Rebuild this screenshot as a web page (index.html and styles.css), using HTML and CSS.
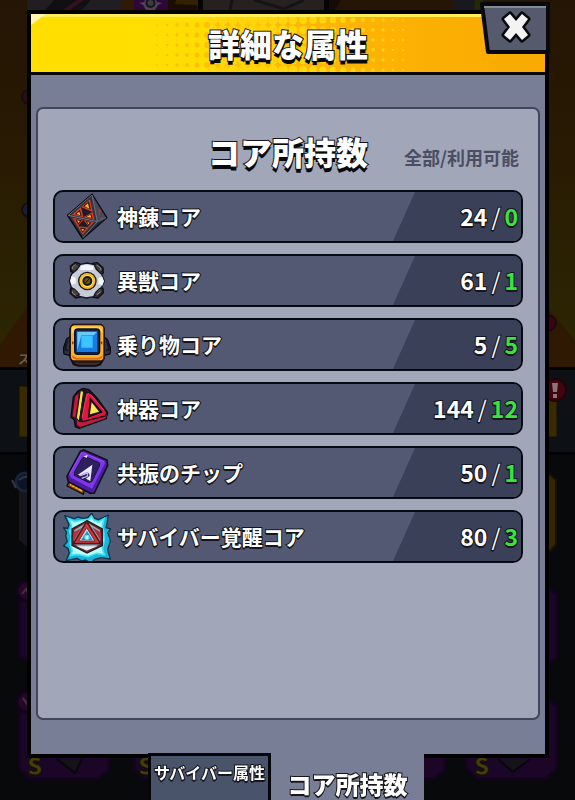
FILE: index.html
```html
<!DOCTYPE html>
<html lang="ja">
<head>
<meta charset="utf-8">
<meta name="viewport" content="width=device-width, initial-scale=1">
<title>詳細な属性</title>
<link rel="stylesheet" href="styles.css">
</head>
<body>
<svg class="backdrop" viewBox="0 0 575 800" preserveAspectRatio="xMidYMin slice" aria-hidden="true">
  <defs>
    <linearGradient id="amber" x1="0" y1="0" x2="0" y2="1"><stop offset="0" stop-color="#241505"/><stop offset=".35" stop-color="#281903"/><stop offset="1" stop-color="#2c2702"/></linearGradient>
  </defs>
  <rect width="575" height="800" fill="#07090b"/>
  <rect width="575" height="368" fill="url(#amber)"/>
  <path d="M0 368V345L28 306V368zM547 306l28 35v27h-28z" fill="#301902"/>
  <path d="M27 0h94v10H27z" fill="#201e23"/><path d="M45 10 54 0h37l-9 10z" fill="#101014"/><path d="M63 10 77 0h7L70 10z" fill="#38101b"/>
  <path d="M121 0h13v10h-13z" fill="#301b02"/><path d="M134 0h34v10h-34z" fill="#2c0738"/>
  <path d="m139 3 5-1 2-4h9l2 4 5 1-4 2-3 5h-9l-3-5z" fill="#4b4350"/><circle cx="150.500" cy="3" r="5" fill="#171419"/><circle cx="150.500" cy="3" r="3" fill="#403847"/>
  <path d="M168 0h9l20 6v4h-29z" fill="#1a0d04"/><path d="M176 0h22v5l-23-1z" fill="#342102"/><path d="M198 0h5v10h-5z" fill="#050506"/>
  <path d="M203 0h121v10H203z" fill="#26211f"/><path d="m254 0 30 9 20-9M232 0l-2 10" fill="none" stroke="#151315" stroke-width="3"/>
  <path d="M324 0h5v10h-5z" fill="#050506"/><path d="M329 0h12l-6 10h-6z" fill="#170b0a"/><path d="M453 0h33v10h-33z" fill="#17191f"/><path d="M475 0h8v10h-9z" fill="#262803"/>
  <g stroke="#170c14" stroke-width="2"><circle cx="29" cy="97" r="7" fill="#261018"/><circle cx="29" cy="210" r="7" fill="#172035"/><circle cx="548" cy="323" r="8" fill="#39030f"/></g>
  <text x="18" y="364" class="backdrop-note">スキル</text>
  <path d="M0 368h575v85H0z" fill="#0d1015"/><path d="M0 367h575v3H0zM0 452h575v3H0z" fill="#020304"/>
  <path d="M19 386h12v51H19zM544 386h13v51h-13z" fill="#382b02" stroke="#171003"/>
  <circle cx="555" cy="390" r="11" fill="#42050f" stroke="#240309" stroke-width="2"/><path d="M552 383h6l-1 9h-4zM553 394h4v4h-4z" fill="#8b7778"/>
  <path d="M19 486h12v64l-12-10z" fill="#16161b"/><circle cx="25" cy="482" r="9" fill="#0c1324" stroke="#192239" stroke-width="3"/><path d="m12 480 4 8M19 480q9-7 14 1" stroke="#31374a" stroke-width="2" fill="none"/>
  <path d="m547 472 9 8v65l-9 9z" fill="#352501" stroke="#181004" stroke-width="2"/>
  <g fill="#1b0627" stroke="#12041a" stroke-width="3"><path d="M19 588h15v78l-15-10zM547 586l10 8v63l-10 8zM19 698h90v71l-10 10H30l-11-11zM134 740h85v29l-10 10h-65l-10-10zM360 740h85v29l-10 10h-65l-10-10zM466 740h81v-42l10 8v62l-11 11h-69l-11-11z"/><circle cx="27" cy="591" r="10" fill="#280729"/><circle cx="27" cy="702" r="10" fill="#280729"/></g>
  <path d="m22 594 4-5 4 8M23 698l4 6 4-5" stroke="#41323e" stroke-width="2" fill="none"/>
  <path d="m57 759 18 14 7-14M498 759l15 13 17-13" fill="#15131a" stroke="#07080a" stroke-width="2"/>
  <g class="backdrop-rank"><text x="27" y="775">S</text><text x="138" y="775">S</text><text x="474" y="775">S</text></g>
</svg>

<main class="dialog-layout">
  <section class="dialog" aria-labelledby="dialog-title">
    <header class="dialog-header">
      <svg class="halftone" viewBox="0 0 514 58" preserveAspectRatio="xMidYMid slice" aria-hidden="true"></svg>
      <h1 class="outlined heading" id="dialog-title">詳細な属性</h1>
    </header>
    <button class="close" type="button" aria-label="閉じる">
      <svg viewBox="0 0 70 52" aria-hidden="true">
        <path d="M2 2h66v48H8z" fill="#555b6d" stroke="#08090d" stroke-width="4" stroke-linejoin="round"/>
        <path d="M4 4h62v2H4z" fill="#858994"/>
        <path d="m30 12 6 7 6-7 6 5-6 8 6 8-6 5-6-7-6 7-6-5 6-8-6-8z" fill="#f3f3f3" stroke="#08090d" stroke-width="5" stroke-linejoin="round" paint-order="stroke"/>
      </svg>
    </button>
    <div class="dialog-body">
      <div class="panel">
        <div class="panel-head">
          <h2 class="outlined heading">コア所持数</h2>
          <p class="legend">全部/利用可能</p>
        </div>
        <ul class="cores">
          <li class="core">
            <svg class="core-icon" viewBox="39 24 144 144" aria-hidden="true">
              <path d="m53 91 73-63 44 70-72 63z" fill="#30333f" stroke="#090b10" stroke-width="5" stroke-linejoin="round"/>
              <path d="M126 30 168 98l-26 12z" fill="#464b5a"/><path d="m142 110 26-12-70 61z" fill="#292d39"/>
              <path d="m66 89 54-46 13 61z" fill="#d63f22"/><path d="m67 98 65 13-34 38z" fill="#c93a20"/>
              <path d="m93 66 35 15-28 16zM100 104l17 23-33-3z" fill="#1d1c25"/>
              <path d="m99 64 18-15 6 25zM74 88l16-14 5 19zM107 95l17-9 4 15zM76 103l19 3-10 13zM108 108l16 4-8 11zM90 129l18 1-10 13z" fill="#2f1b20"/>
              <path d="m104 64 10-9 4 16zM79 87l9-7 3 11zM110 95l11-6 3 9zM81 106l9 2-5 6zM112 111l7 2-4 5zM94 132l9 1-5 6z" fill="#ffac38"/>
              <path d="m55 91 71-61 16 80-44 49M55 91l87 19 26-12" fill="none" stroke="#6b7181" stroke-width="3"/><path d="m145 79 7-5-5 15M153 96l5 8" fill="none" stroke="#d33226" stroke-width="3"/>
            </svg>
            <span class="outlined core-name">神錬コア</span><span class="core-value"><span class="outlined count">24<i>/</i><b>0</b></span></span>
          </li>
          <li class="core">
            <svg class="core-icon" viewBox="39 216 144 144" aria-hidden="true">
              <g fill="#443d40" stroke="#0b0d14" stroke-width="4" stroke-linejoin="round"><path d="m62 258-1-14 15-12 13 4 9 10-22 22zM127 235l15-2 17 15 1 16-10 6-25-22zM62 310l-2 15 17 14 14-3 5-11-23-22zM127 336l17 3 16-16-1-13-14-6-24 21z"/></g>
              <path d="m91 238 20-4 22 5 6 14 16 15 8 20-8 19-16 13-8 15-22 4-21-5-8-14-16-13-6-19 7-21 16-13z" fill="#c7ccdb" stroke="#111521" stroke-width="4"/>
              <path d="m92 243 18-4 19 4 2 12H91zM64 273l-3 15 4 12 12-5v-17zM157 275l5 14-5 13-12-6v-17z" fill="#f5f5fb"/>
              <g fill="#4a403f" stroke="#15151c" stroke-width="3" stroke-linejoin="round"><path d="m64 256-1-11 14-10 12 8-16 17zM133 241l9-5 15 13v11l-9 2zM64 313l-1 10 14 11 12-6-16-17zM133 329l9 5 15-13-1-9-8-2z"/></g>
              <path d="m67 252v-6l9-7M140 240l12 9v7M67 319l1 6 9 6M140 330l12-10" fill="none" stroke="#94877a" stroke-width="3"/>
              <circle cx="112" cy="288" r="28" fill="#171717"/><circle cx="112" cy="288" r="24" fill="#ffb817"/><circle cx="112" cy="288" r="18" fill="#ffe96b"/><circle cx="112" cy="288" r="15" fill="#161515"/><circle cx="112" cy="288" r="9" fill="#665217"/><path d="m106 294 12-13" stroke="#181310" stroke-width="3"/>
            </svg>
            <span class="outlined core-name">異獣コア</span><span class="core-value"><span class="outlined count">61<i>/</i><b>1</b></span></span>
          </li>
          <li class="core">
            <svg class="core-icon" viewBox="39 18 144 144" aria-hidden="true">
              <path d="m63 64-13 8-10 28 2 17 20 5zM159 64l13 9 10 27-2 17-21 5z" fill="#303444" stroke="#080b13" stroke-width="4"/><path d="m51 75-6 29 10 3M171 75l6 29-10 3" fill="none" stroke="#121622" stroke-width="6"/>
              <path d="M68 28h86l9 13v88l-12 20-13 4H85l-15-5-10-20V41z" fill="#2c1711" stroke="#090b13" stroke-width="4"/>
              <rect x="61" y="29" width="101" height="109" rx="13" fill="#ffaf20" stroke="#291717" stroke-width="4"/><path d="M68 35h83l6 12v7L147 42H78L65 57V43z" fill="#ffdc58"/><path d="M65 121q2 13 14 13h65q13 0 15-13l-15 7H80z" fill="#dc7515"/>
              <rect x="74" y="42" width="75" height="76" rx="9" fill="#172042" stroke="#09132a" stroke-width="4"/><path d="M80 49h62v62H80z" fill="#147ce3"/><path d="M82 51h59l-10 10H94L82 105z" fill="#6cc8f7"/><path d="M94 62h34v36H94z" fill="#3dc4ff"/><path d="m66 78 7 5-7 6zM157 78l-7 5 7 6z" fill="#963d13"/><path d="m78 143 8 4h52l8-4" fill="none" stroke="#4c4148" stroke-width="3"/>
            </svg>
            <span class="outlined core-name">乗り物コア</span><span class="core-value"><span class="outlined count">5<i>/</i><b>5</b></span></span>
          </li>
          <li class="core">
            <svg class="core-icon" viewBox="39 210 144 144" aria-hidden="true">
              <path d="m83 229 15-9 19 4 24 25 32 44-5 18-80 29-12-5-3-20-10-8 7-62z" fill="#3d1224" stroke="#080b10" stroke-width="4"/>
              <path d="m76 243 10-6-10 70-8-3zM80 316l78-9 13-6-4 9-77 26-8-6z" fill="#c9193e"/><path d="m91 227 11 2-14 91-9-12z" fill="#f3df41" stroke="#17141b" stroke-width="3"/><path d="m104 226-13 95" stroke="#131720" stroke-width="8"/>
              <path d="m116 231 18 16 37 46-5 10-68 17-5-10 14-76z" fill="#de1642" stroke="#14131a" stroke-width="4"/><path d="m116 235-7 10-13 63M121 237l41 49" fill="none" stroke="#ff5070" stroke-width="2"/>
              <path d="m121 252 34 39-39 14z" fill="#342312" stroke="#090a0b" stroke-width="4"/><path d="m125 262 22 28-27 8z" fill="#ffe753"/>
            </svg>
            <span class="outlined core-name">神器コア</span><span class="core-value"><span class="outlined count">144<i>/</i><b>12</b></span></span>
          </li>
          <li class="core">
            <svg class="core-icon" viewBox="39 27 144 144" aria-hidden="true">
              <path d="m60 117 45 26-5 20-49-25z" fill="#82401e" stroke="#0e1018" stroke-width="4"/><path d="m62 122 37 20-3 14-37-20z" fill="#ffad28"/><path d="m69 126-4 13M78 131l-4 13M87 136l-4 13" stroke="#9f571e" stroke-width="3"/>
              <path d="m91 34 10-4 70 30 2 16-40 83-12 1-66-35-4-16z" fill="#4c1b9e" stroke="#0e1020" stroke-width="5"/><path d="m95 36 66 27 7 8-41 76-64-34-6-9z" fill="#7d36eb"/><path d="m95 37-36 64M98 37l65 28" fill="none" stroke="#a866f5" stroke-width="2"/><path d="m126 147 39-77 5 3-38 80z" fill="#4d20a2"/>
              <path d="m97 54 10-4 42 19-1 10-22 45-10 4-43-22v-9z" fill="#2d205e" stroke="#23143f" stroke-width="3"/><path d="m127 74-6 49-13-7 11-9-2-8-24 9-9-4zM101 49l12-4-3 9z" fill="#eeeaff"/><path d="m89 107 24-10-1 12-17 6" fill="none" stroke="#b9afe7" stroke-width="4"/>
            </svg>
            <span class="outlined core-name">共振のチップ</span><span class="core-value"><span class="outlined count">50<i>/</i><b>1</b></span></span>
          </li>
          <li class="core">
            <svg class="core-icon" viewBox="39 219 144 144" aria-hidden="true">
              <path d="m44 227 29 9 11-5 14 4 16-3 11-13 7 15 14 5 29-14-4 28-3 10 15 4-10 11 5 12 3 14-5 15-3 11 8 27-29-4-19 6-11 10-15-9-12 3-14-8-33 7 10-22-4-14-13-9 11-12-5-17 3-11-10-15 13 4 4-13z" fill="#17b4dc" stroke="#0d3446" stroke-width="4" stroke-linejoin="round"/>
              <path d="m56 236 19 9 23-5 17-1 10-10 7 12 14 5 16-10-5 23 4 17 2 26-6 23 6 19-23-4-26 10-22-5-12-2-18 3 5-14-7-20 4-21-5-17 6-16z" fill="#b8fff8" stroke="#45e3f7" stroke-width="5"/>
              <path d="m111 242 46 25v50l-46 22-45-23v-49z" fill="#762028" stroke="#201c28" stroke-width="4"/><path d="m111 247 39 23v43l-40 20-37-20v-43z" fill="#8dadb8"/>
              <path d="m110 245-40 66h82z" fill="#d53334" stroke="#451c29" stroke-width="5"/><path d="m110 263-24 40h49z" fill="#bddee8" stroke="#7b2737" stroke-width="3"/><path d="m70 277 24-12-26 42zM152 277l-25-15 27 43z" fill="#b73036"/><path d="M79 319h64l-32 12z" fill="#e7eef0"/>
              <path d="m111 273-17 27h34z" fill="#1891c3"/><circle cx="111" cy="292" r="8" fill="#65e4fa"/><path d="M109 288h5v9h-5z" fill="#ecffff"/>
            </svg>
            <span class="outlined core-name">サバイバー覚醒コア</span><span class="core-value"><span class="outlined count">80<i>/</i><b>3</b></span></span>
          </li>
        </ul>
      </div>
    </div>
  </section>
  <nav class="tabs" aria-label="属性の切り替え">
    <button class="tab outlined" type="button">サバイバー属性</button>
    <button class="tab tab-active outlined" type="button" aria-current="page">コア所持数</button>
  </nav>
</main>
<script src="halftone.js"></script>
</body>
</html>
```

FILE: styles.css
```css
* { box-sizing: border-box; }

body {
  margin: 0;
  background: #07090b;
  color: #fff;
  font-family: "Noto Sans CJK JP", "Noto Sans", sans-serif;
}

h1, h2, p, ul { margin: 0; padding: 0; }
button { font-family: inherit; color: inherit; }

.backdrop {
  position: fixed;
  inset: 0;
  width: 100%;
  height: 100%;
}

.backdrop-note { fill: #6c5b4f; font-size: 12px; font-weight: 700; }
.backdrop-rank { fill: #443e05; stroke: #111003; font-size: 24px; font-weight: 900; }

.dialog-layout {
  position: relative;
  display: flex;
  flex-direction: column;
  min-height: 100vh;
  padding: 10px 26px 0 27px;
}

.dialog {
  position: relative;
  flex: 1;
  display: flex;
  flex-direction: column;
  border: 4px solid #000;
  background: #777e96;
}

.dialog-header {
  position: relative;
  display: flex;
  align-items: center;
  justify-content: center;
  height: 61px;
  border-bottom: 3px solid #08090b;
  background: #ffc000;
}

.halftone {
  position: absolute;
  inset: 0;
  width: 100%;
  height: 100%;
}

.outlined {
  -webkit-text-stroke: 2px #15151b;
  paint-order: stroke fill;
  text-shadow: 0 2px 0 #15151b;
}

.heading {
  position: relative;
  font-size: 32px;
  line-height: 40px;
  font-weight: 900;
  text-shadow: 0 4px 0 #08090b;
}

.close {
  position: absolute;
  top: -12px;
  right: -5px;
  width: 70px;
  height: 52px;
  padding: 0;
  border: 0;
  background: none;
  cursor: pointer;
}

.close svg { display: block; }

.dialog-body {
  flex: 1;
  display: flex;
  padding: 32px 5px 34px;
}

.panel {
  flex: 1;
  padding: 22px 15px;
  border: 2px solid #41465e;
  border-radius: 7px;
  background: #a1a6b9;
}

.panel-head {
  display: grid;
  grid-template-columns: 1fr auto 1fr;
  align-items: center;
  height: 40px;
  margin-bottom: 19px;
}

.panel-head .heading { grid-column: 2; }

.legend {
  justify-self: end;
  padding: 12px 4px 0 0;
  color: #4a4e63;
  font-size: 18px;
  line-height: 24px;
  font-weight: 700;
  white-space: nowrap;
}

.cores {
  display: grid;
  gap: 11px;
  list-style: none;
}

.core {
  display: flex;
  align-items: center;
  height: 53px;
  padding-left: 8px;
  border: 2px solid #080a11;
  border-radius: 10px;
  background: #535972;
  overflow: hidden;
}

.core-icon {
  flex: none;
  width: 48px;
  height: 48px;
}

.core-name {
  flex: 1;
  padding: 0 0 2px 6px;
  font-size: 21px;
  line-height: 32px;
  font-weight: 700;
}

.core-value {
  display: flex;
  align-items: center;
  justify-content: flex-end;
  align-self: stretch;
  width: 128px;
  padding: 0 3px 2px 0;
  background: #394057;
  clip-path: polygon(22px 0, 100% 0, 100% 100%, 0 100%);
}

.count {
  font-size: 23px;
  line-height: 32px;
  font-weight: 700;
}

.count i {
  padding: 0 4px;
  font-style: normal;
  font-weight: 400;
}

.count b { color: #38e43d; font-weight: 700; }

.tabs {
  position: relative;
  display: flex;
  justify-content: center;
  height: 47px;
  margin-top: -5px;
  padding-right: 4px;
}

.tab {
  width: 123px;
  padding: 4px 0 16px;
  border: 3px solid #050609;
  border-bottom: 0;
  background: #49536a;
  font-size: 16px;
  line-height: 24px;
  font-weight: 700;
  white-space: nowrap;
}

.tab-active {
  width: 153px;
  padding: 14px 0 0;
  border: 0;
  background: #777e96;
  font-size: 24px;
  line-height: 32px;
  font-weight: 900;
}
```

FILE: halftone.js
```js
// Fills the header with a yellow-to-orange wash and a dot screen between the two.
const dots = [];
const dot = (x, y, r, color) => dots.push(`<circle cx="${x}" cy="${y}" r="${r}" fill="${color}"/>`);

for (let x = 116, step = 0; x <= 206; x += 10, step++) {
  for (let y = 11; y <= 61; y += 10) dot(x, y, 0.4 + step * 0.42, '#ffbe08');
}
for (let x = 372, step = 0; x >= 182; x -= 10, step++) {
  for (let y = 6; y <= 56; y += 10) dot(x, y, Math.min(5, 1 + step * 0.32), step < 5 ? '#ffcf10' : '#ffd60c');
}

document.querySelector('.halftone').innerHTML = `
  <defs><linearGradient id="wash">
    <stop offset="0" stop-color="#ffdf00"/><stop offset=".34" stop-color="#ffdd00"/>
    <stop offset=".48" stop-color="#ffb807"/><stop offset="1" stop-color="#f9a900"/>
  </linearGradient></defs>
  <rect width="514" height="58" fill="url(#wash)"/>
  ${dots.join('')}
  <path d="M0 0h514v3H0z" fill="#ffed55"/>
  <path d="M0 0h15L0 11z" fill="#fff5b0"/>`;
```
